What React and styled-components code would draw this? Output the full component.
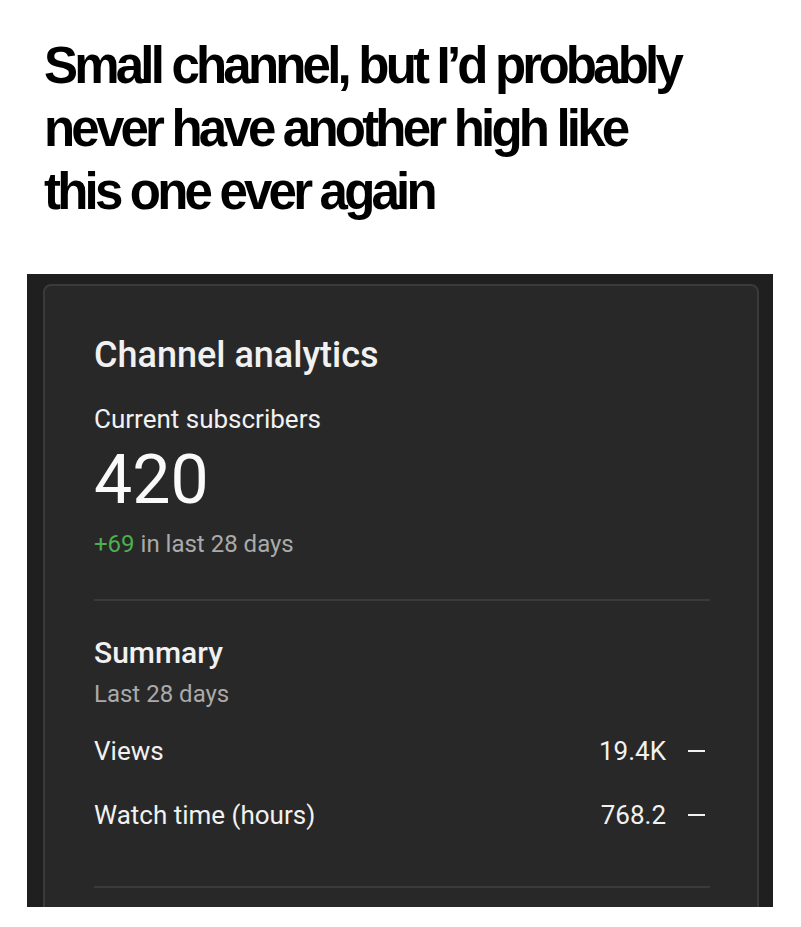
import React from 'react'
import styled, { createGlobalStyle } from 'styled-components'

const Global = createGlobalStyle`
  html, body { margin: 0; padding: 0; background: #ffffff; }
  body { width: 801px; height: 927px; overflow: hidden; }
`

const Page = styled.div`
  width: 801px;
  height: 927px;
  background: #fff;
  display: flex;
  flex-direction: column;
`

const Caption = styled.h1`
  margin: 0;
  padding: 34px 0 0 44px;
  font-family: "Liberation Sans", Arial, sans-serif;
  font-weight: 700;
  font-size: 51px;
  line-height: 63px;
  letter-spacing: -3.8px;
  color: #000;
  white-space: nowrap;
`

const Shot = styled.div`
  margin: 51px 0 0 27px;
  width: 746px;
  height: 633px;
  background: #1f1f1f;
  padding: 10px 14px 0 16px;
  box-sizing: border-box;
  overflow: hidden;
`

const Card = styled.div`
  height: 700px;
  background: #282828;
  border: 2px solid #3a3a3a;
  border-radius: 8px;
  padding: 47px 47px 0 49px;
  box-sizing: border-box;
  font-family: Roboto, "Liberation Sans", sans-serif;
  color: #f1f1f1;
`

const Heading = styled.div`
  font-size: 36px;
  font-weight: 500;
  line-height: 44px;
`

const Label = styled.div`
  font-size: 26px;
  line-height: 32px;
  margin-top: 26px;
`

const BigNumber = styled.div`
  font-size: 68px;
  line-height: 72px;
  margin-top: 9px;
  color: #fafafa;
`

const Delta = styled.div`
  font-size: 24px;
  line-height: 32px;
  color: #aaaaaa;
  margin-top: 12px;
  span { color: #4caf50; }
`

const Divider = styled.hr`
  border: 0;
  height: 2px;
  background: #3a3a3a;
  margin: ${p => p.$top || 0}px 0 0 0;
`

const SubHeading = styled.div`
  font-size: 30px;
  font-weight: 500;
  line-height: 40px;
  margin-top: 32px;
`

const Muted = styled.div`
  font-size: 24px;
  line-height: 32px;
  color: #aaaaaa;
  margin-top: 5px;
`

const Rows = styled.div`
  display: flex;
  flex-direction: column;
  gap: 32px;
  margin-top: 25px;
`

const Row = styled.div`
  display: flex;
  align-items: center;
  justify-content: space-between;
  font-size: 26px;
  line-height: 32px;
`

const Value = styled.div`
  display: flex;
  align-items: center;
  gap: 22px;
`

const Dash = styled.span`
  width: 17px;
  height: 2px;
  background: #f1f1f1;
  margin-right: 5px;
`

const metrics = [
  { name: 'Views', value: '19.4K' },
  { name: 'Watch time (hours)', value: '768.2' },
]

export default function App() {
  return (
    <Page>
      <Global />
      <Caption>
        Small channel, but I’d probably<br />
        never have another high like<br />
        this one ever again
      </Caption>
      <Shot>
        <Card>
          <Heading>Channel analytics</Heading>
          <Label>Current subscribers</Label>
          <BigNumber>420</BigNumber>
          <Delta><span>+69</span> in last 28 days</Delta>
          <Divider $top={39} />
          <SubHeading>Summary</SubHeading>
          <Muted>Last 28 days</Muted>
          <Rows>
            {metrics.map(m => (
              <Row key={m.name}>
                <span>{m.name}</span>
                <Value>{m.value}<Dash /></Value>
              </Row>
            ))}
          </Rows>
          <Divider $top={55} />
        </Card>
      </Shot>
    </Page>
  )
}
